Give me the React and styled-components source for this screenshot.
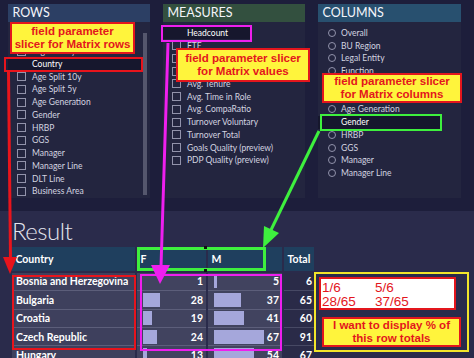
import React from 'react'
import styled, { createGlobalStyle, css } from 'styled-components'

const rows = ['BU Region', 'Legal Entity', 'Country', 'Age Split 10y', 'Age Split 5y', 'Age Generation', 'Gender', 'HRBP', 'GGS', 'Manager', 'Manager Line', 'DLT Line', 'Business Area']
const measures = ['Headcount', 'FTE', 'Avg. Age', 'Avg. Salary', 'Avg. Tenure', 'Avg. Time in Role', 'Avg. CompaRatio', 'Turnover Voluntary', 'Turnover Total', 'Goals Quality (preview)', 'PDP Quality (preview)']
const columns = ['Overall', 'BU Region', 'Legal Entity', 'Function', 'Age Split 10y', 'Age Split 5y', 'Age Generation', 'Gender', 'HRBP', 'GGS', 'Manager', 'Manager Line']

const data = [
  { country: 'Bosnia and Herzegovina', f: 1, m: 5, total: 6 },
  { country: 'Bulgaria', f: 28, m: 37, total: 65 },
  { country: 'Croatia', f: 19, m: 41, total: 60 },
  { country: 'Czech Republic', f: 24, m: 67, total: 91 },
  { country: 'Hungary', f: 13, m: 54, total: 67 },
]

const fBar = (v) => Math.max(1, v * 0.83 - 6.3)
const mBar = (v) => Math.max(1, v * 0.76 - 0.8)

function Slicer({ title, items, tone, padTop, round, marked, markWidth, scroll }) {
  return (
    <Panel>
      <PanelHead $tone={tone}>{title}</PanelHead>
      <PanelBody>
        <List $padTop={padTop}>
          {items.map((name) => (
            <Item key={name} $mark={name === marked ? markWidth : 0}>
              <Box $round={round} $hidden={name === marked} />
              {name}
            </Item>
          ))}
        </List>
        {scroll && <Thumb />}
      </PanelBody>
    </Panel>
  )
}

export default function App() {
  return (
    <Page>
      <GlobalStyle />
      <Slicers>
        <Slicer title="ROWS" items={rows} tone="#2c3f64" padTop={10} marked="Country" markWidth={133} scroll />
        <Slicer title="MEASURES" items={measures} tone="#33503f" padTop={4.6} marked="Headcount" markWidth={87} />
        <Slicer title="COLUMNS" items={columns} tone="#28506f" padTop={4.6} round marked="Gender" markWidth={122} />
      </Slicers>

      <Result>
        <Title>Result</Title>
        <MatrixHead>
          <HeadCell>Country</HeadCell>
          <HeadCell>F</HeadCell>
          <HeadCell>M</HeadCell>
          <HeadCell>Total</HeadCell>
        </MatrixHead>
        <MatrixBody>
          {data.map((r) => (
            <React.Fragment key={r.country}>
              <NameCell>{r.country}</NameCell>
              <ValueCell>
                {r.f > 1 && <Bar style={{ width: fBar(r.f) }} />}
                <Num>{r.f}</Num>
              </ValueCell>
              <ValueCell>
                <Bar style={{ width: mBar(r.m) }} />
                <Num>{r.m}</Num>
              </ValueCell>
              <TotalCell>{r.total}</TotalCell>
            </React.Fragment>
          ))}
        </MatrixBody>
      </Result>

      {/* annotations drawn over the report */}
      <Marker $x={4} $y={57} $w={139} $h={15} $c="#e8141c" />
      <Marker $x={161} $y={25} $w={91} $h={17} $c="#ee1fee" />
      <Marker $x={320} $y={114} $w={122} $h={17} $c="#3ef03e" />
      <Marker $x={12} $y={275} $w={124} $h={75} $c="#e8141c" />
      <Marker $x={140} $y={274} $w={142} $h={77} $c="#ee1fee" />
      <Marker $x={137} $y={247} $w={129} $h={24} $c="#3ef03e" $thick />

      <Callout $x={10} $y={22} $w={125} $h={32}>field parameter<br />slicer for Matrix rows</Callout>
      <Callout $x={176} $y={48} $w={134} $h={34}>field parameter slicer<br />for Matrix values</Callout>
      <Callout $x={322} $y={73} $w={140} $h={30}>field parameter slicer<br />for Matrix columns</Callout>

      <Frame>
        <Fractions>
          <span>1/6</span><span>5/6</span>
          <span>28/65</span><span>37/65</span>
        </Fractions>
        <Note>I want to display % of<br />this row totals</Note>
      </Frame>

      <Arrows width="474" height="358" viewBox="0 0 474 358">
        <line x1="8.5" y1="72" x2="10.5" y2="259" stroke="#e8141c" strokeWidth="3" />
        <polygon points="3,257 17,257 10,274" fill="#e8141c" />
        <line x1="168" y1="43" x2="161" y2="267" stroke="#ee1fee" strokeWidth="3" />
        <polygon points="151,265 170,265 160,284" fill="#ee1fee" />
        <line x1="319" y1="131" x2="270" y2="232" stroke="#3ef03e" strokeWidth="3" />
        <polygon points="263,248 264,226 279,233" fill="#3ef03e" />
        <rect x="204" y="246" width="3" height="3" fill="#111" />
        <rect x="204" y="269" width="3" height="3" fill="#111" />
      </Arrows>
    </Page>
  )
}

const GlobalStyle = createGlobalStyle`
  html, body { margin: 0; padding: 0; }
  body {
    background: #1d1e3b;
    font-family: Lato, "Open Sans", sans-serif;
  }
`

const Page = styled.div`
  position: relative;
  width: 474px;
  height: 358px;
  overflow: hidden;
  background: #1d1e3b;
  display: flex;
  flex-direction: column;
`

const Slicers = styled.div`
  display: flex;
  gap: 13px;
  padding: 4px 0 0 8px;
  height: 196px;
`

const Panel = styled.div`
  width: 142px;
  &:last-child { width: 143px; }
  display: flex;
  flex-direction: column;
  background: #23253f;
`

const PanelHead = styled.div`
  height: 18px;
  line-height: 18px;
  padding-left: 4.5px;
  background: ${(p) => p.$tone};
  color: #f4f5fa;
  font-size: 12.5px;
`

const PanelBody = styled.div`
  flex: 1;
  display: flex;
  min-height: 0;
`

const List = styled.div`
  flex: 1;
  padding-top: ${(p) => p.$padTop}px;
  overflow: hidden;
`

const Item = styled.div`
  display: flex;
  align-items: center;
  gap: 6px;
  height: 12.75px;
  padding-left: 9px;
  box-sizing: border-box;
  font-size: 8.5px;
  color: #d3d4e0;
  white-space: nowrap;
  ${(p) => p.$mark && css`
    width: ${p.$mark}px;
    background: #16172d;
    color: #fff;
  `}
`

const Box = styled.span`
  flex: none;
  width: ${(p) => (p.$round ? 8 : 9)}px;
  height: ${(p) => (p.$round ? 8 : 9)}px;
  margin-left: ${(p) => (p.$round ? 1 : 0)}px;
  margin-right: ${(p) => (p.$round ? -1 : 0)}px;
  box-sizing: border-box;
  border: 1px solid #9293ab;
  border-radius: ${(p) => (p.$round ? '50%' : '0')};
  visibility: ${(p) => (p.$hidden ? 'hidden' : 'visible')};
`

const Thumb = styled.div`
  width: 4px;
  margin: 11px 3px 3px 2px;
  background: #55576d;
`

const Result = styled.div`
  flex: 1;
  margin-top: 13px;
  padding: 5px 0 0 12px;
  background: #2a2b4b;
`

const Title = styled.div`
  height: 30px;
  line-height: 30px;
  margin-bottom: 1px;
  font-size: 24px;
  font-weight: 300;
  letter-spacing: -0.5px;
  color: #e4e5ee;
`

const grid = css`
  display: grid;
  grid-template-columns: 123px 69px 74px 30px;
  column-gap: 2px;
`

const MatrixHead = styled.div`
  ${grid}
  height: 24px;
`

const HeadCell = styled.div`
  display: flex;
  align-items: center;
  padding-left: 3.5px;
  background: #1f3f5e;
  color: #fff;
  font-size: 10.5px;
  font-weight: 700;
`

const MatrixBody = styled.div`
  ${grid}
  margin-top: 2px;
  grid-auto-rows: 18.4px;
`

const bodyCell = css`
  box-sizing: border-box;
  border-bottom: 1px solid #5c5e7a;
  color: #fff;
  font-size: 10.5px;
  font-weight: 700;
`

const NameCell = styled.div`
  ${bodyCell}
  display: flex;
  align-items: center;
  padding-left: 4px;
  background: #3e405d;
  white-space: nowrap;
`

const ValueCell = styled.div`
  ${bodyCell}
  display: grid;
  align-items: center;
  background: #41435f;
`

const Bar = styled.div`
  grid-area: 1 / 1;
  justify-self: start;
  height: 14px;
  margin-left: 6px;
  background: #a5a7db;
`

const Num = styled.span`
  grid-area: 1 / 1;
  justify-self: end;
  padding-right: 3px;
`

const TotalCell = styled.div`
  ${bodyCell}
  display: flex;
  align-items: center;
  justify-content: flex-end;
  padding-right: 2px;
  background: #2a2b48;
  border-bottom-color: #474964;
`

const Marker = styled.div`
  position: absolute;
  left: ${(p) => p.$x}px;
  top: ${(p) => p.$y}px;
  width: ${(p) => p.$w}px;
  height: ${(p) => p.$h}px;
  box-sizing: border-box;
  border: ${(p) => (p.$thick ? 3 : 2)}px solid ${(p) => p.$c};
`

const Callout = styled.div`
  position: absolute;
  left: ${(p) => p.$x}px;
  top: ${(p) => p.$y}px;
  width: ${(p) => p.$w}px;
  height: ${(p) => p.$h}px;
  box-sizing: border-box;
  display: flex;
  align-items: center;
  justify-content: center;
  text-align: center;
  background: #fff43c;
  border: 2px solid #e3161d;
  color: #e3161d;
  font: bold 11.5px/13px "Liberation Sans", Arial, sans-serif;
`

const Frame = styled.div`
  position: absolute;
  left: 314px;
  top: 272px;
  width: 155px;
  height: 80px;
  box-sizing: border-box;
  border: 2px solid #f2e52a;
  padding: 3px 0 0 3px;
  display: flex;
  flex-direction: column;
  gap: 7px;
`

const Fractions = styled.div`
  width: 137px;
  height: 33px;
  box-sizing: border-box;
  padding: 2px 0 0 1px;
  display: grid;
  grid-template-columns: 53px auto;
  background: #fff;
  border: 2px solid #e3161d;
  color: #e3161d;
  font: 13.5px/13px "Liberation Sans", Arial, sans-serif;
`

const Note = styled.div`
  width: 139px;
  height: 30px;
  margin-left: 3px;
  box-sizing: border-box;
  display: flex;
  align-items: center;
  justify-content: center;
  text-align: center;
  background: #fff43c;
  border: 2px solid #e3161d;
  color: #e3161d;
  font: bold 11.5px/13px "Liberation Sans", Arial, sans-serif;
`

const Arrows = styled.svg`
  position: absolute;
  left: 0;
  top: 0;
  pointer-events: none;
`
